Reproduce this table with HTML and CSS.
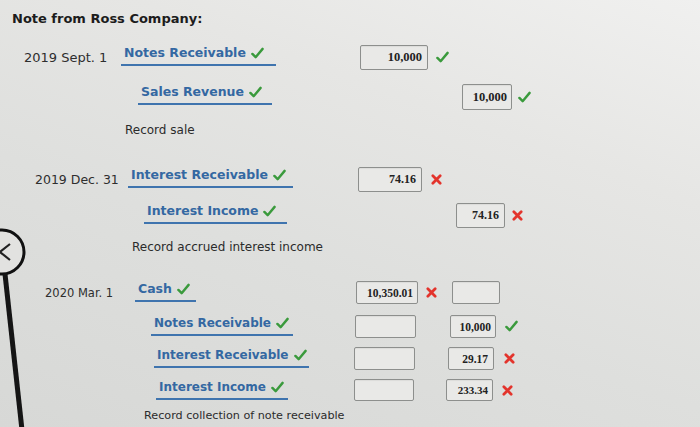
FILE: index.html
```html
<!DOCTYPE html>
<html>
<head>
<meta charset="utf-8">
<link rel="stylesheet" href="styles.css">
</head>
<body>
<div class="page">
  <h1 class="title">Note from Ross Company:</h1>

  <div class="row r1">
    <span class="date">2019 Sept. 1</span>
    <span class="acct"><span class="name">Notes Receivable</span><svg class="ok" viewBox="0 0 14 14"><path d="M1.5 7.5 L5 11 L12.5 2"/></svg></span>
    <span class="box debit">10,000</span>
    <svg class="mark ok" viewBox="0 0 14 14"><path d="M1.5 7.5 L5 11 L12.5 2"/></svg>
  </div>
  <div class="row r2">
    <span class="acct"><span class="name">Sales Revenue</span><svg class="ok" viewBox="0 0 14 14"><path d="M1.5 7.5 L5 11 L12.5 2"/></svg></span>
    <span class="box credit">10,000</span>
    <svg class="mark ok" viewBox="0 0 14 14"><path d="M1.5 7.5 L5 11 L12.5 2"/></svg>
  </div>
  <p class="memo m1">Record sale</p>

  <div class="row r3">
    <span class="date">2019 Dec. 31</span>
    <span class="acct"><span class="name">Interest Receivable</span><svg class="ok" viewBox="0 0 14 14"><path d="M1.5 7.5 L5 11 L12.5 2"/></svg></span>
    <span class="box debit">74.16</span>
    <svg class="mark bad" viewBox="0 0 12 12"><path d="M2 2 L10 10 M10 2 L2 10"/></svg>
  </div>
  <div class="row r4">
    <span class="acct"><span class="name">Interest Income</span><svg class="ok" viewBox="0 0 14 14"><path d="M1.5 7.5 L5 11 L12.5 2"/></svg></span>
    <span class="box credit">74.16</span>
    <svg class="mark bad" viewBox="0 0 12 12"><path d="M2 2 L10 10 M10 2 L2 10"/></svg>
  </div>
  <p class="memo m2">Record accrued interest income</p>

  <div class="row r5">
    <span class="date">2020 Mar. 1</span>
    <span class="acct"><span class="name">Cash</span><svg class="ok" viewBox="0 0 14 14"><path d="M1.5 7.5 L5 11 L12.5 2"/></svg></span>
    <span class="box debit">10,350.01</span>
    <svg class="mark bad" viewBox="0 0 12 12"><path d="M2 2 L10 10 M10 2 L2 10"/></svg>
    <span class="box credit"></span>
  </div>
  <div class="row r6">
    <span class="acct"><span class="name">Notes Receivable</span><svg class="ok" viewBox="0 0 14 14"><path d="M1.5 7.5 L5 11 L12.5 2"/></svg></span>
    <span class="box debit"></span>
    <span class="box credit">10,000</span>
    <svg class="mark ok" viewBox="0 0 14 14"><path d="M1.5 7.5 L5 11 L12.5 2"/></svg>
  </div>
  <div class="row r7">
    <span class="acct"><span class="name">Interest Receivable</span><svg class="ok" viewBox="0 0 14 14"><path d="M1.5 7.5 L5 11 L12.5 2"/></svg></span>
    <span class="box debit"></span>
    <span class="box credit">29.17</span>
    <svg class="mark bad" viewBox="0 0 12 12"><path d="M2 2 L10 10 M10 2 L2 10"/></svg>
  </div>
  <div class="row r8">
    <span class="acct"><span class="name">Interest Income</span><svg class="ok" viewBox="0 0 14 14"><path d="M1.5 7.5 L5 11 L12.5 2"/></svg></span>
    <span class="box debit"></span>
    <span class="box credit">233.34</span>
    <svg class="mark bad" viewBox="0 0 12 12"><path d="M2 2 L10 10 M10 2 L2 10"/></svg>
  </div>
  <p class="memo m3">Record collection of note receivable</p>

  <svg class="prev" viewBox="0 0 60 207" width="60" height="207">
    <circle cx="2" cy="32" r="22" class="ring"/>
    <path d="M10 24 L0 32 L10 40" class="chev"/>
    <path d="M5 54 L22 210" class="stand"/>
  </svg>
</div>
</body>
</html>
```

FILE: styles.css
```css
html, body {
  margin: 0;
  padding: 0;
}
body {
  width: 700px;
  height: 427px;
  overflow: hidden;
  background: linear-gradient(20deg, #d7d8d6 0%, #dedfdd 40%, #e6e6e4 70%, #f0f0ef 100%);
  font-family: "DejaVu Sans", Verdana, sans-serif;
  color: #2b2b2b;
}
.page {
  position: relative;
  height: 427px;
  display: flex;
  flex-direction: column;
}
.title {
  margin: 10px 0 0 12px;
  font-size: 13px;
  line-height: 18px;
  font-weight: bold;
  color: #1c1c1c;
}
.row {
  display: flex;
  align-items: flex-start;
}
.date {
  align-self: center;
  font-size: 13px;
  line-height: 14px;
  color: #2e2e2e;
  white-space: nowrap;
}
.acct {
  display: flex;
  align-items: center;
  box-sizing: border-box;
  height: 21px;
  padding: 0 0 3px 3px;
  border-bottom: 2px solid #3f74ae;
  white-space: nowrap;
}
.name {
  font-size: 12.5px;
  line-height: 16px;
  font-weight: bold;
  color: #3468a2;
}
.acct svg {
  flex-shrink: 0;
  width: 13px;
  height: 13px;
  margin-left: 5px;
}
svg.ok path {
  fill: none;
  stroke: #3a9a3c;
  stroke-width: 2.6;
  stroke-linecap: round;
  stroke-linejoin: round;
}
svg.bad path {
  fill: none;
  stroke: #e3342c;
  stroke-width: 3;
  stroke-linecap: round;
}
.box {
  flex-shrink: 0;
  box-sizing: border-box;
  display: flex;
  align-items: center;
  justify-content: flex-end;
  padding-right: 5px;
  border: 1px solid #8d8f8d;
  border-radius: 2px;
  background: #e9e9e7;
  box-shadow: inset 0 1px 1px rgba(0,0,0,0.06);
  font-family: "Liberation Serif", "Times New Roman", serif;
  font-weight: bold;
  font-size: 12.5px;
  color: #222;
}
.mark {
  flex-shrink: 0;
  align-self: center;
  width: 13px;
  height: 13px;
}
.memo {
  margin: 0;
  font-size: 12px;
  line-height: 16px;
  color: #2b2b2b;
}

/* Entry 1 */
.r1 { margin-top: 17px; padding-left: 24px; }
.r1 .date { width: 97px; }
.r1 .acct { width: 155px; }
.r1 .debit { margin-left: 84px; width: 68px; height: 25px; }
.r1 .mark { margin-left: 8px; }
.r2 { margin-top: 14px; padding-left: 138px; }
.r2 .acct { width: 134px; }
.r2 .credit { margin-left: 190px; width: 50px; height: 26px; padding-right: 4px; }
.r2 .mark { margin-left: 6px; }
.m1 { margin-top: 12px; padding-left: 125px; }

/* Entry 2 */
.r3 { margin-top: 29px; padding-left: 35px; }
.r3 .date { width: 93px; font-size: 12.5px; }
.r3 .acct { width: 165px; }
.r3 .debit { margin-left: 65px; width: 64px; height: 25px; font-size: 12px; }
.r3 .mark { margin-left: 9px; width: 11px; height: 11px; }
.r4 { margin-top: 11px; padding-left: 144px; }
.r4 .acct { width: 143px; }
.r4 .credit { margin-left: 169px; width: 49px; height: 25px; font-size: 12px; }
.r4 .mark { margin-left: 7px; width: 11px; height: 11px; }
.m2 { margin-top: 11px; padding-left: 132px; }

/* Entry 3 */
.r5 { margin-top: 26px; padding-left: 45px; }
.r5 .date { width: 90px; font-size: 11.5px; }
.r5 .acct { width: 61px; }
.r5 .debit { margin-left: 160px; width: 62px; height: 23px; font-size: 11.5px; padding-right: 4px; }
.r5 .mark { margin-left: 8px; width: 11px; height: 11px; }
.r5 .credit { margin-left: 15px; width: 48px; height: 23px; }
.r6, .r7, .r8 { }
.r6 .name, .r7 .name, .r8 .name { font-size: 12px; }
.r6 { margin-top: 11px; padding-left: 151px; }
.r6 .acct { width: 142px; }
.r6 .debit { margin-left: 62px; width: 61px; height: 23px; }
.r6 .credit { margin-left: 34px; width: 46px; height: 23px; font-size: 11.5px; padding-right: 4px; }
.r6 .mark { margin-left: 9px; }
.r7 { margin-top: 9px; padding-left: 154px; }
.r7 .acct { width: 155px; }
.r7 .debit { margin-left: 45px; width: 61px; height: 23px; }
.r7 .credit { margin-left: 33px; width: 46px; height: 23px; font-size: 11.5px; }
.r7 .mark { margin-left: 10px; width: 11px; height: 11px; }
.r8 { margin-top: 9px; padding-left: 156px; }
.r8 .acct { width: 132px; }
.r8 .debit { margin-left: 66px; width: 60px; height: 22px; }
.r8 .credit { margin-left: 32px; width: 47px; height: 22px; font-size: 11px; padding-right: 4px; }
.r8 .mark { margin-left: 9px; width: 11px; height: 11px; }
.m3 { margin-top: 8px; padding-left: 144px; font-size: 11.2px; line-height: 14px; }

/* phone stand / back button overlay */
.prev {
  position: absolute;
  left: 0;
  top: 220px;
}
.prev .ring {
  fill: #e2e2e0;
  stroke: #111;
  stroke-width: 3;
}
.prev .chev {
  fill: none;
  stroke: #222;
  stroke-width: 2.2;
}
.prev .stand {
  fill: none;
  stroke: #151515;
  stroke-width: 5;
}
```
